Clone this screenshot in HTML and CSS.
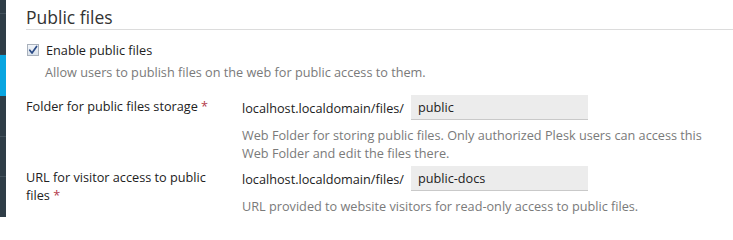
FILE: index.html
```html
<!DOCTYPE html>
<html>
<head>
<meta charset="utf-8">
<link rel="stylesheet" href="styles.css">
</head>
<body>
<div class="page">
  <nav class="sidebar">
    <div class="seg s1"></div>
    <div class="seg s2"></div>
    <div class="seg active"></div>
    <div class="seg s3"></div>
    <div class="seg s4"></div>
    <div class="seg s5"></div>
  </nav>
  <main class="content">
    <h2 class="section-title">Public files</h2>
    <div class="check-row">
      <span class="checkbox"><svg width="10" height="10" viewBox="0 0 10 10"><path d="M1.8 5.2 L4 8 L8.6 1.4" fill="none" stroke="#2b4b86" stroke-width="1.7" stroke-linecap="round" stroke-linejoin="round"/></svg></span>
      <span class="check-label">Enable public files</span>
    </div>
    <div class="check-hint">Allow users to publish files on the web for public access to them.</div>

    <div class="form-row first">
      <div class="label">Folder for public files <span class="nowrap">storage <span class="req">*</span></span></div>
      <div class="field">
        <div class="field-line">
          <span class="prefix">localhost.localdomain/files/</span>
          <span class="input">public</span>
        </div>
        <div class="hint">Web Folder for storing public files. Only authorized Plesk users can access this Web Folder and edit the files there.</div>
      </div>
    </div>

    <div class="form-row">
      <div class="label"><span class="line">URL for visitor access to public</span> <span class="nowrap">files <span class="req">*</span></span></div>
      <div class="field">
        <div class="field-line">
          <span class="prefix">localhost.localdomain/files/</span>
          <span class="input">public-docs</span>
        </div>
        <div class="hint">URL provided to website visitors for read-only access to public files.</div>
      </div>
    </div>
  </main>
</div>
</body>
</html>
```
FILE: styles.css
```css
html, body {
  margin: 0;
  padding: 0;
  background: #fff;
  overflow: hidden;
}
body {
  font-family: "Open Sans", "Liberation Sans", sans-serif;
  font-size: 12.7px;
  color: #222;
}
.page {
  display: flex;
  width: 733px;
  height: 217px;
}
.sidebar {
  width: 6px;
  flex: none;
  display: flex;
  flex-direction: column;
  background: #2f3d47;
}
.seg {
  flex: none;
  border-bottom: 1px solid #44525c;
}
.s1 { height: 13px; }
.s2 { height: 40px; border-bottom: 1px solid #35434d; }
.active { height: 41px; background: #09a5e0; border-bottom: none; }
.s3 { height: 40px; }
.s4 { height: 39px; }
.s5 { flex: 1; border-bottom: none; }

.content {
  flex: 1;
  padding-left: 20px;
}
.section-title {
  margin: 5px 0 0;
  font-size: 17.5px;
  line-height: 24px;
  font-weight: 400;
  color: #333;
  border-bottom: 1px solid #dcdcdc;
}
.check-row {
  display: flex;
  align-items: center;
  margin-top: 11px;
  height: 18px;
  line-height: 18px;
}
.checkbox {
  width: 10px;
  height: 10px;
  margin-left: 1px;
  border: 1px solid #a9b1bc;
  background: linear-gradient(#f2f5f9, #dbe3ec);
  display: flex;
  align-items: center;
  justify-content: center;
}
.check-label {
  margin-left: 7px;
  color: #222;
}
.check-hint {
  margin-top: 4px;
  margin-left: 19px;
  line-height: 18px;
  color: #7a7a7a;
}
.form-row {
  display: flex;
  margin-top: 4px;
}
.form-row.first { margin-top: 14px; }
.label {
  width: 216px;
  flex: none;
  line-height: 18px;
  padding-top: 2px;
  padding-right: 10px;
  box-sizing: border-box;
  color: #222;
}
.nowrap { white-space: nowrap; }
.line { white-space: nowrap; }
.req { color: #b33a4a; }
.field {
  flex: 1;
}
.field-line {
  display: flex;
  align-items: center;
  height: 25px;
}
.prefix {
  color: #222;
  margin-right: 7px;
}
.input {
  width: 170px;
  height: 24px;
  line-height: 24px;
  padding-left: 7px;
  background: #ececec;
  border-bottom: 1px solid #c9c9c9;
  color: #222;
}
.hint {
  max-width: 470px;
  margin-top: 6px;
  line-height: 18px;
  color: #7a7a7a;
}
```
